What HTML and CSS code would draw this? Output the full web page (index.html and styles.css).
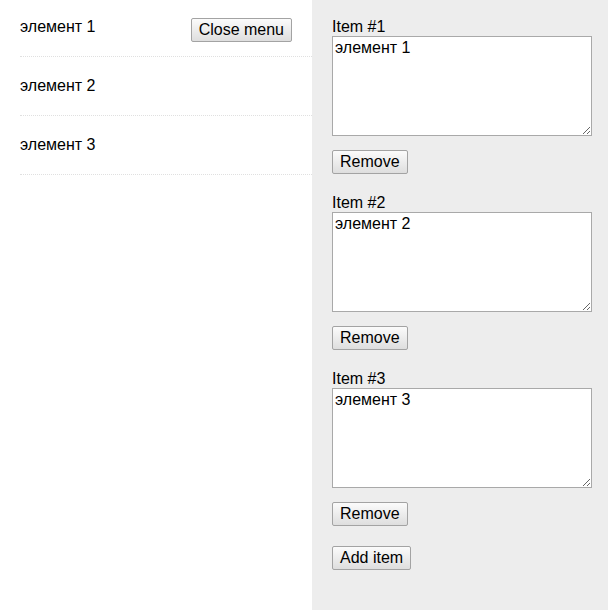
FILE: index.html
```html
<!DOCTYPE html>
<html>
<head>
<meta charset="utf-8">
<link rel="stylesheet" href="styles.css">
</head>
<body>
<div class="layout">
  <div class="menu">
    <ul class="list">
      <li class="row"><span>элемент 1</span><button class="btn">Close menu</button></li>
      <li class="row"><span>элемент 2</span></li>
      <li class="row"><span>элемент 3</span></li>
    </ul>
  </div>
  <div class="editor">
    <div class="item">
      <label class="label">Item #1</label>
      <textarea class="area">элемент 1</textarea>
      <div><button class="btn">Remove</button></div>
    </div>
    <div class="item">
      <label class="label">Item #2</label>
      <textarea class="area">элемент 2</textarea>
      <div><button class="btn">Remove</button></div>
    </div>
    <div class="item">
      <label class="label">Item #3</label>
      <textarea class="area">элемент 3</textarea>
      <div><button class="btn">Remove</button></div>
    </div>
    <div><button class="btn">Add item</button></div>
  </div>
</div>
</body>
</html>
```
FILE: styles.css
```css
html, body {
  margin: 0;
  padding: 0;
  height: 100%;
}
body {
  font-family: "Liberation Sans", Arial, sans-serif;
  font-size: 16px;
  color: #000;
  background: #fff;
}
.layout {
  display: flex;
  min-height: 610px;
}
.menu {
  width: 312px;
  background: #fff;
}
.list {
  list-style: none;
  margin: 0 0 0 20px;
  padding: 0;
}
.row {
  display: flex;
  justify-content: space-between;
  align-items: flex-start;
  box-sizing: border-box;
  padding: 18px 20px 0 0;
  height: 57px;
  line-height: 18px;
  border-bottom: 1px dotted #e0e0e0;
}
.row + .row {
  padding-top: 20px;
  height: 59px;
}
.editor {
  flex: 1;
  background: #ededed;
  padding: 18px 16px 20px 20px;
}
.item {
  margin-bottom: 20px;
}
.label {
  display: block;
  line-height: 18px;
}
.area {
  display: block;
  box-sizing: border-box;
  width: 260px;
  height: 100px;
  margin: 0 0 14px 0;
  padding: 2px 2px;
  border: 1px solid #a9a9a9;
  background: #fff;
  font-family: "Liberation Sans", Arial, sans-serif;
  font-size: 16px;
  line-height: 18px;
  color: #000;
  resize: both;
}
.btn {
  font-family: "Liberation Sans", Arial, sans-serif;
  font-size: 16px;
  line-height: 18px;
  color: #000;
  padding: 2px 7px;
  border: 1px solid #a3a3a3;
  border-radius: 2px;
  background: linear-gradient(#fbfbfb, #dedede);
  box-sizing: border-box;
  height: 24px;
  margin: 0;
}
```
